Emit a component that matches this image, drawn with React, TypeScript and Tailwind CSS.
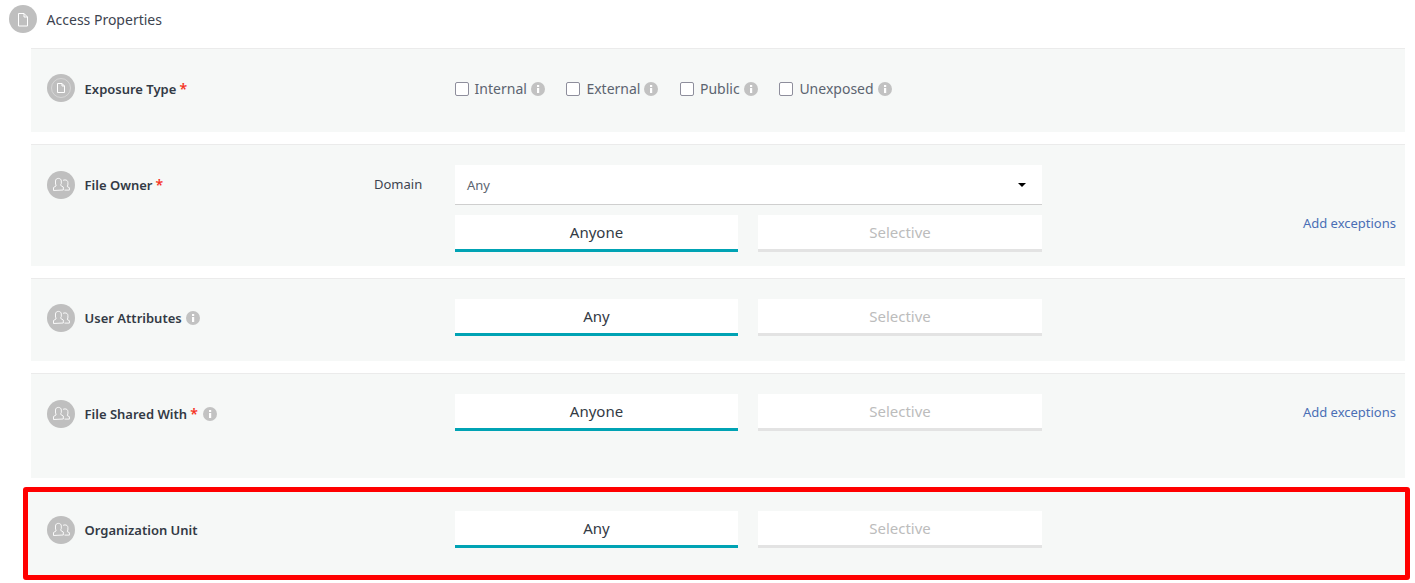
import React from "react";

function DocIcon({ ring = false }: { ring?: boolean }) {
  return (
    <svg width="28" height="28" viewBox="0 0 28 28" fill="none" stroke="#fff">
      {ring && <circle cx="14" cy="14" r="9.5" strokeWidth="0.7" opacity="0.5" />}
      {ring ? (
        <path d="M10.5 9.5h4.5l2.5 2.5v6.5h-7z M15 9.5v2.5h2.5" strokeWidth="1" />
      ) : (
        <path d="M9.5 8.5h5.5l3.5 3.5v9h-9z M15 8.5v3.5h3.5" strokeWidth="1" />
      )}
    </svg>
  );
}

function UsersIcon() {
  return (
    <svg width="28" height="28" viewBox="0 0 28 28" fill="none" stroke="#fff" strokeWidth="0.9">
      <path d="M6.5 19.5v-3l2.5-1.5v-1l-.5-1V10c0-1.6 1.2-2.6 2.9-2.6s2.9 1 2.9 2.6v2.5l-.5 1v1l2.5 1.5v3z" />
      <path d="M16 9.4c.6-.3 1.3-.5 2-.5 1.7 0 2.9 1 2.9 2.6v2.5l-.5 1v.7l2 1v2.4h-4.9" />
    </svg>
  );
}

function Info({ className = "" }: { className?: string }) {
  return (
    <svg width="14" height="14" viewBox="0 0 14 14" className={className}>
      <circle cx="7" cy="7" r="7" fill="#c2c2c2" />
      <rect x="6" y="6" width="2.2" height="5" fill="#fff" />
      <rect x="6" y="3" width="2.2" height="2" fill="#fff" />
    </svg>
  );
}

function Circle({ children }: { children: React.ReactNode }) {
  return (
    <div className="w-7 h-7 shrink-0 rounded-full bg-[#bfbfbf] flex items-center justify-center">
      {children}
    </div>
  );
}

function Label({ text, required, info }: { text: string; required?: boolean; info?: boolean }) {
  return (
    <div className="ml-[9.6px] flex items-center text-[13px] font-semibold text-[#333a45] leading-[28px]">
      <span>{text}</span>
      {required && <span className="ml-[3px] text-[#f5341f] text-[14px]">*</span>}
      {info && <Info className={required ? "ml-[5px]" : "ml-[4px]"} />}
    </div>
  );
}

function Tabs({ first }: { first: string }) {
  return (
    <div className="flex gap-5 w-[587px]">
      <div className="w-[283px] h-[37px] bg-white border-b-[3px] border-[#00a3b4] text-[#333a45] text-[15px] flex items-center justify-center">
        {first}
      </div>
      <div className="w-[284px] h-[37px] bg-white border-b-[3px] border-[#e3e3e3] text-[#bcbcbc] text-[15px] flex items-center justify-center">
        Selective
      </div>
    </div>
  );
}

function Check({ label, className, gap }: { label: string; className: string; gap: string }) {
  return (
    <div className={`flex items-center ${className}`}>
      <span className="mt-[2px] w-[14px] h-[14px] bg-white border border-[#8e8e9c] rounded-[2px]" />
      <span className={`${gap} text-[14px] text-[#5c6470]`}>{label}</span>
      <Info className="ml-[4px] mt-[2px]" />
    </div>
  );
}

function AddExceptions({ top }: { top: string }) {
  return (
    <div className={`flex-1 text-right pr-[9px] text-[13px] leading-[18px] text-[#4a6fb5] ${top}`}>
      Add exceptions
    </div>
  );
}

export default function App() {
  return (
    <div className="w-[1415px] h-[583px] bg-white overflow-hidden font-['Noto_Sans',sans-serif]">
      <div className="h-[48px] pl-[9px] pt-[5px] flex items-start">
        <Circle>
          <DocIcon />
        </Circle>
        <span className="ml-[9.6px] text-[14px] leading-[30px] text-[#3d4450]">Access Properties</span>
      </div>

      <div className="ml-[31px] w-[1374px]">
        <div className="h-[84px] bg-[#f6f8f7] border-t border-[#ebebeb] pl-4 pt-[25px] flex">
          <div className="w-[408px] flex items-start">
            <Circle>
              <DocIcon ring />
            </Circle>
            <div className="mt-px">
              <Label text="Exposure Type" required />
            </div>
          </div>
          <div className="flex items-center h-[28px]">
            <Check label="Internal" className="w-[111px]" gap="ml-[5.6px]" />
            <Check label="External" className="w-[114px]" gap="ml-[6.4px]" />
            <Check label="Public" className="w-[99px]" gap="ml-[6px]" />
            <Check label="Unexposed" className="" gap="ml-[6.4px]" />
          </div>
        </div>

        <div className="mt-3 h-[122px] bg-[#f6f8f7] border-t border-[#ebebeb] pl-4 pt-[26px] flex">
          <div className="w-[327px] flex items-start">
            <Circle>
              <UsersIcon />
            </Circle>
            <Label text="File Owner" required />
          </div>
          <div className="w-[81px] text-[13px] leading-[26px] text-[#3d4450]">Domain</div>
          <div className="-mt-[6px] w-[587px]">
            <div className="h-10 bg-white border-b border-[#cfcfcf] pl-3 pr-4 flex items-center justify-between text-[13px] text-[#5c6470]">
              <span className="mt-[2px]">Any</span>
              <span className="w-0 h-0 border-x-4 border-x-transparent border-t-4 border-t-black" />
            </div>
            <div className="mt-[10px]">
              <Tabs first="Anyone" />
            </div>
          </div>
          <AddExceptions top="mt-[43px]" />
        </div>

        <div className="mt-3 h-[83px] bg-[#f6f8f7] border-t border-[#ebebeb] pl-4 pt-[25px] flex">
          <div className="w-[408px] flex items-start">
            <Circle>
              <UsersIcon />
            </Circle>
            <Label text="User Attributes" info />
          </div>
          <div className="-mt-[5px]">
            <Tabs first="Any" />
          </div>
        </div>

        <div className="mt-3 h-[105px] bg-[#f6f8f7] border-t border-[#ebebeb] pl-4 pt-[26px] flex">
          <div className="w-[408px] flex items-start">
            <Circle>
              <UsersIcon />
            </Circle>
            <Label text="File Shared With" required info />
          </div>
          <div className="-mt-[6px]">
            <Tabs first="Anyone" />
          </div>
          <AddExceptions top="mt-[3px]" />
        </div>
      </div>

      <div className="mt-[9px] ml-[23px] w-[1387px] h-[93px] border-[5px] border-[#ff0000] rounded-[3px] bg-white">
        <div className="h-full w-[1377px] bg-[#f6f8f7] pl-[19px] pt-[24px] flex">
          <div className="w-[408px] flex items-start">
            <Circle>
              <UsersIcon />
            </Circle>
            <Label text="Organization Unit" />
          </div>
          <div className="-mt-[5px]">
            <Tabs first="Any" />
          </div>
        </div>
      </div>
    </div>
  );
}
